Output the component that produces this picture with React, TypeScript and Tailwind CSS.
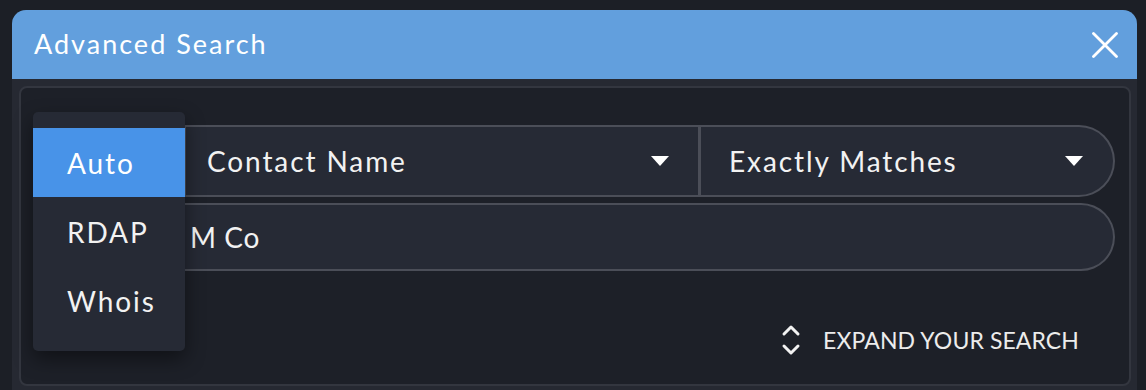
import React from "react";

// Advanced search modal with the source selector menu open over the first field.

const FONT = { fontFamily: "Lato, 'Noto Sans', sans-serif" };

function Caret() {
  return (
    <svg width="18" height="10" viewBox="0 0 18 10" aria-hidden="true">
      <path d="M0 0 H18 L9 10 Z" fill="#ffffff" />
    </svg>
  );
}

function ExpandIcon() {
  return (
    <svg width="20" height="32" viewBox="0 0 20 32" aria-hidden="true">
      <path
        d="M3 10 L10 3 L17 10 M3 22 L10 29 L17 22"
        fill="none"
        stroke="#f2f2f2"
        strokeWidth="3"
        strokeLinecap="round"
        strokeLinejoin="round"
      />
    </svg>
  );
}

const SOURCES = ["Auto", "RDAP", "Whois"];

export default function App() {
  return (
    <div
      className="h-[390px] w-[1146px] overflow-hidden bg-[#1c1f26] pl-[12px] pr-[9px] pt-[10px] text-[#f2f2f2]"
      style={FONT}
    >
      <div className="flex h-[400px] flex-col overflow-hidden rounded-t-[14px] bg-[#262932]">
        <div className="flex h-[69px] shrink-0 items-center justify-between bg-[#629fdd] pl-[22px] pr-[19px]">
          <span className="text-[27px] tracking-[2px] text-white">Advanced Search</span>
          <button type="button" aria-label="Close" className="flex h-[26px] w-[26px] items-center justify-center">
            <svg width="26" height="26" viewBox="0 0 26 26">
              <path d="M1.5 1.5 L24.5 24.5 M24.5 1.5 L1.5 24.5" stroke="#ffffff" strokeWidth="2.8" strokeLinecap="round" />
            </svg>
          </button>
        </div>

        <div className="flex-1 pl-[7px] pr-[6px] pt-[7px]">
          <div className="relative flex h-[300px] flex-col rounded-[8px] border-2 border-[#33363f] bg-[#1d2028] pl-[14px] pr-[14px] pt-[37px]">
            {/* row 1: source (covered by menu) / field / operator */}
            <div className="flex h-[72px] items-stretch overflow-hidden rounded-r-full rounded-l-[6px] border-2 border-[#4b4e58] bg-[#262a35]">
              <div className="w-[149px] border-r-[3px] border-[#4b4e58]" />
              <div className="flex w-[512px] items-center justify-between pl-[21px] pr-[29px] text-[28px] tracking-[1.9px]">
                <span>Contact Name</span>
                <Caret />
              </div>
              <div className="w-[3px] bg-[#4b4e58]" />
              <div className="flex flex-1 items-center justify-between pl-[28px] pr-[30px] text-[28px] tracking-[1.9px]">
                <span>Exactly Matches</span>
                <Caret />
              </div>
            </div>

            {/* row 2: value */}
            <div className="mt-[6px] flex h-[68px] items-center rounded-r-full rounded-l-[6px] border-2 border-[#4b4e58] bg-[#262a35] pl-[153px] text-[28px] tracking-[0.6px]">
              M Co
            </div>

            <div className="mt-[52px] flex items-center justify-end gap-[22px] pr-[36px]">
              <ExpandIcon />
              <span className="text-[23px] tracking-[0.1px] text-[#ececec]">EXPAND YOUR SEARCH</span>
            </div>

            {/* open source menu */}
            <div className="absolute left-[12px] top-[24px] w-[152px] rounded-[5px] bg-[#262a35] py-[16px] shadow-[0_8px_20px_rgba(0,0,0,0.45)]">
              {SOURCES.map((s) => (
                <div
                  key={s}
                  className={
                    s === "Auto"
                      ? "flex h-[69px] items-center bg-[#4893e8] pl-[34px] text-[28px] tracking-[1.9px] text-white"
                      : "flex h-[69px] items-center pl-[34px] text-[28px] tracking-[1.9px] text-[#f2f2f2]"
                  }
                >
                  {s}
                </div>
              ))}
            </div>
          </div>
        </div>
      </div>
    </div>
  );
}
